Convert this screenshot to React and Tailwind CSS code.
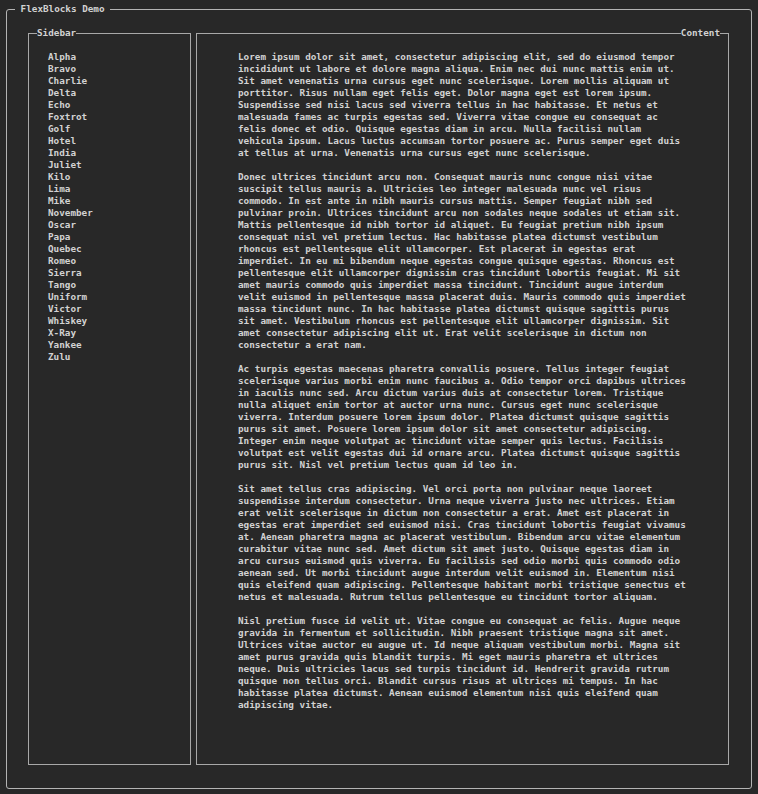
const sidebarItems = [
  "Alpha", "Bravo", "Charlie", "Delta", "Echo", "Foxtrot", "Golf", "Hotel",
  "India", "Juliet", "Kilo", "Lima", "Mike", "November", "Oscar", "Papa",
  "Quebec", "Romeo", "Sierra", "Tango", "Uniform", "Victor", "Whiskey",
  "X-Ray", "Yankee", "Zulu",
];

const paragraphs = [
  "Lorem ipsum dolor sit amet, consectetur adipiscing elit, sed do eiusmod tempor incididunt ut labore et dolore magna aliqua. Enim nec dui nunc mattis enim ut. Sit amet venenatis urna cursus eget nunc scelerisque. Lorem mollis aliquam ut porttitor. Risus nullam eget felis eget. Dolor magna eget est lorem ipsum. Suspendisse sed nisi lacus sed viverra tellus in hac habitasse. Et netus et malesuada fames ac turpis egestas sed. Viverra vitae congue eu consequat ac felis donec et odio. Quisque egestas diam in arcu. Nulla facilisi nullam vehicula ipsum. Lacus luctus accumsan tortor posuere ac. Purus semper eget duis at tellus at urna. Venenatis urna cursus eget nunc scelerisque.",
  "Donec ultrices tincidunt arcu non. Consequat mauris nunc congue nisi vitae suscipit tellus mauris a. Ultricies leo integer malesuada nunc vel risus commodo. In est ante in nibh mauris cursus mattis. Semper feugiat nibh sed pulvinar proin. Ultrices tincidunt arcu non sodales neque sodales ut etiam sit. Mattis pellentesque id nibh tortor id aliquet. Eu feugiat pretium nibh ipsum consequat nisl vel pretium lectus. Hac habitasse platea dictumst vestibulum rhoncus est pellentesque elit ullamcorper. Est placerat in egestas erat imperdiet. In eu mi bibendum neque egestas congue quisque egestas. Rhoncus est pellentesque elit ullamcorper dignissim cras tincidunt lobortis feugiat. Mi sit amet mauris commodo quis imperdiet massa tincidunt. Tincidunt augue interdum velit euismod in pellentesque massa placerat duis. Mauris commodo quis imperdiet massa tincidunt nunc. In hac habitasse platea dictumst quisque sagittis purus sit amet. Vestibulum rhoncus est pellentesque elit ullamcorper dignissim. Sit amet consectetur adipiscing elit ut. Erat velit scelerisque in dictum non consectetur a erat nam.",
  "Ac turpis egestas maecenas pharetra convallis posuere. Tellus integer feugiat scelerisque varius morbi enim nunc faucibus a. Odio tempor orci dapibus ultrices in iaculis nunc sed. Arcu dictum varius duis at consectetur lorem. Tristique nulla aliquet enim tortor at auctor urna nunc. Cursus eget nunc scelerisque viverra. Interdum posuere lorem ipsum dolor. Platea dictumst quisque sagittis purus sit amet. Posuere lorem ipsum dolor sit amet consectetur adipiscing. Integer enim neque volutpat ac tincidunt vitae semper quis lectus. Facilisis volutpat est velit egestas dui id ornare arcu. Platea dictumst quisque sagittis purus sit. Nisl vel pretium lectus quam id leo in.",
  "Sit amet tellus cras adipiscing. Vel orci porta non pulvinar neque laoreet suspendisse interdum consectetur. Urna neque viverra justo nec ultrices. Etiam erat velit scelerisque in dictum non consectetur a erat. Amet est placerat in egestas erat imperdiet sed euismod nisi. Cras tincidunt lobortis feugiat vivamus at. Aenean pharetra magna ac placerat vestibulum. Bibendum arcu vitae elementum curabitur vitae nunc sed. Amet dictum sit amet justo. Quisque egestas diam in arcu cursus euismod quis viverra. Eu facilisis sed odio morbi quis commodo odio aenean sed. Ut morbi tincidunt augue interdum velit euismod in. Elementum nisi quis eleifend quam adipiscing. Pellentesque habitant morbi tristique senectus et netus et malesuada. Rutrum tellus pellentesque eu tincidunt tortor aliquam.",
  "Nisl pretium fusce id velit ut. Vitae congue eu consequat ac felis. Augue neque gravida in fermentum et sollicitudin. Nibh praesent tristique magna sit amet. Ultrices vitae auctor eu augue ut. Id neque aliquam vestibulum morbi. Magna sit amet purus gravida quis blandit turpis. Mi eget mauris pharetra et ultrices neque. Duis ultricies lacus sed turpis tincidunt id. Hendrerit gravida rutrum quisque non tellus orci. Blandit cursus risus at ultrices mi tempus. In hac habitasse platea dictumst. Aenean euismod elementum nisi quis eleifend quam adipiscing vitae.",
];

function App() {
  return (
    <div className="h-screen bg-[#282828] pt-[3px] px-[6px] pb-[5px] font-['DejaVu_Sans_Mono',monospace] text-[9.3px] leading-[12px] font-bold text-[#d2d2d2]">
      {/* outer frame */}
      <fieldset className="h-[786px] min-w-0 border border-[#b4b4b4] rounded-[3px]">
        <legend className="ml-[8px] px-[5.6px] leading-[12px]">FlexBlocks Demo</legend>

        <div className="flex gap-[5px] pt-[12px] pl-[21px] pr-[22px]">
          {/* sidebar */}
          <fieldset className="w-[163px] h-[738px] min-w-0 border border-[#a8a8a8]">
            <legend className="ml-[8px] leading-[12px]">Sidebar</legend>
            <ul className="pt-[12px] pl-[19px]">
              {sidebarItems.map((item) => (
                <li key={item}>{item}</li>
              ))}
            </ul>
          </fieldset>

          {/* content */}
          <fieldset className="flex-1 h-[738px] min-w-0 border border-[#a8a8a8]">
            <legend className="ml-auto mr-[8px] leading-[12px]">Content</legend>
            <div className="pt-[12px] pl-[41px]">
              {paragraphs.map((text, i) => (
                <p key={i} className="w-[80ch] mb-[12px]">
                  {text}
                </p>
              ))}
            </div>
          </fieldset>
        </div>
      </fieldset>
    </div>
  );
}

export default App;
